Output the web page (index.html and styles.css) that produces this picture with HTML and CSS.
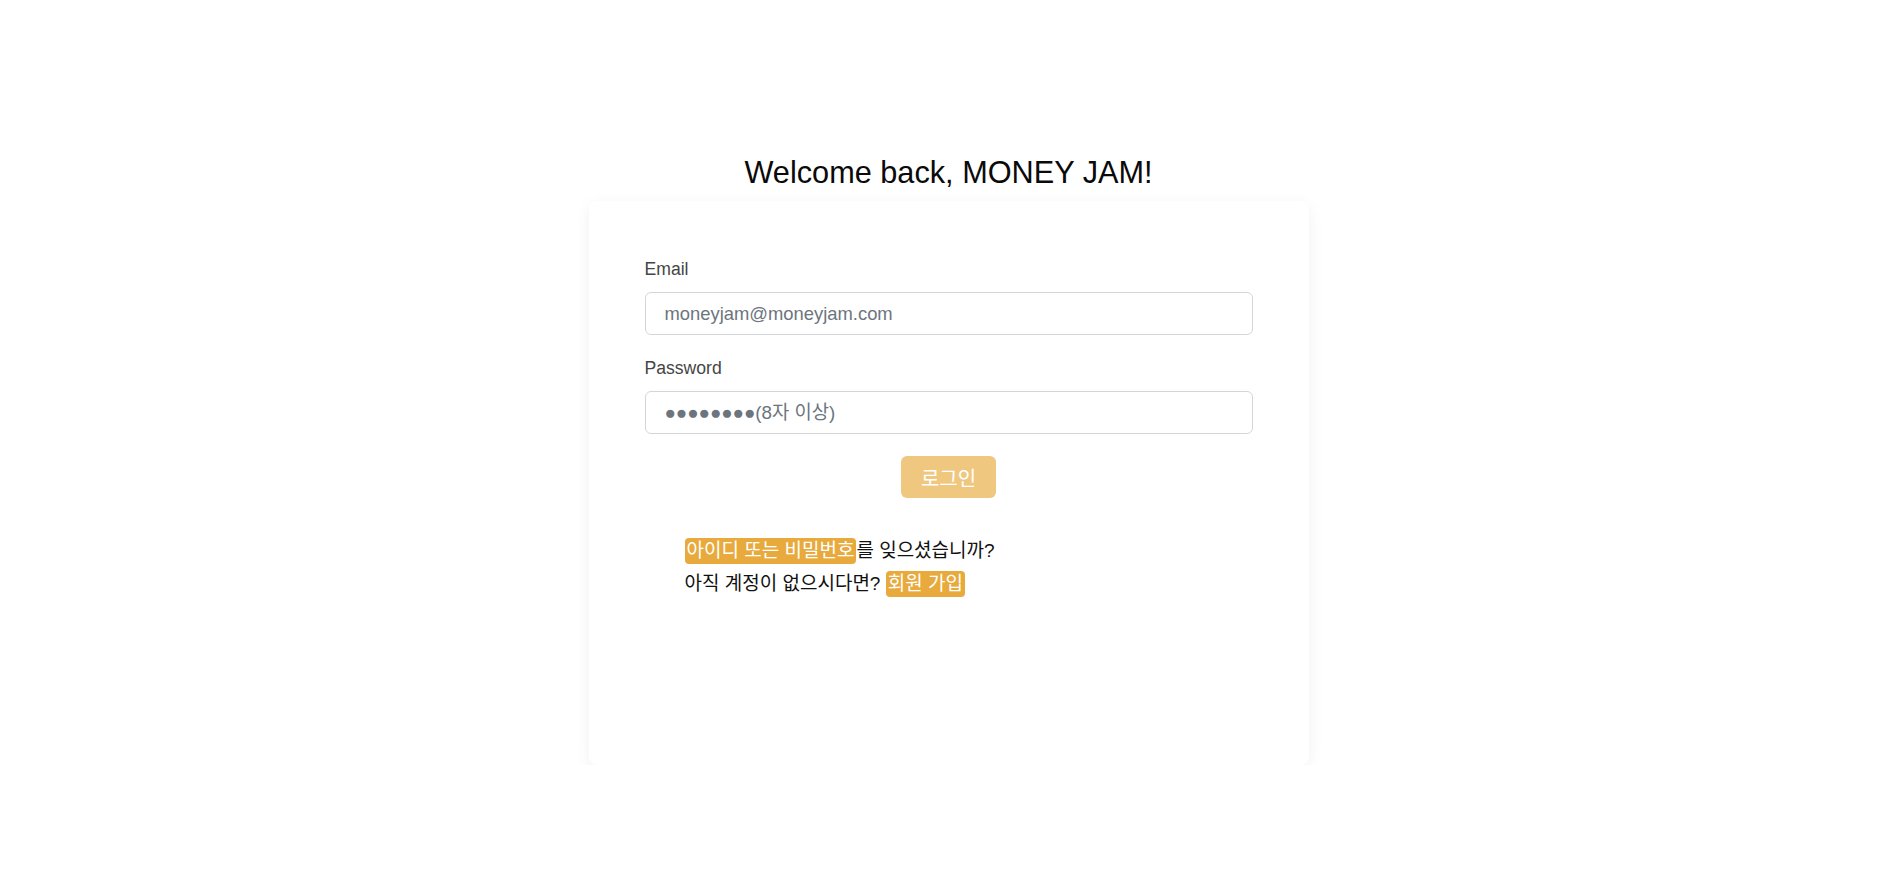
FILE: index.html
```html
<!DOCTYPE html>
<html lang="ko">
<head>
<meta charset="utf-8">
<title>MONEY JAM Login</title>
<link rel="stylesheet" href="styles.css">
</head>
<body>
<main class="page">
  <h1 class="title">Welcome back, MONEY JAM!</h1>
  <section class="card">
    <form class="form">
      <div class="field">
        <label class="label" for="email">Email</label>
        <input class="input" id="email" type="text" placeholder="moneyjam@moneyjam.com">
      </div>
      <div class="field">
        <label class="label" for="pw">Password</label>
        <input class="input input-pw" id="pw" type="text" placeholder="●●●●●●●●(8자 이상)">
      </div>
      <div class="actions">
        <button class="btn" type="button">로그인</button>
      </div>
    </form>
    <ul class="links">
      <li><a class="badge" href="#">아이디 또는 비밀번호</a>를 잊으셨습니까?</li>
      <li>아직 계정이 없으시다면? <a class="badge" href="#">회원 가입</a></li>
    </ul>
  </section>
</main>
</body>
</html>
```

FILE: styles.css
```css
html, body {
  margin: 0;
  padding: 0;
  background: #ffffff;
}

body {
  font-family: "Liberation Sans", Arial, "Noto Sans CJK KR", sans-serif;
  color: #111111;
}

.page {
  display: flex;
  flex-direction: column;
  align-items: center;
  padding-top: 156px;
}

.title {
  margin: 0 0 11px 0;
  font-size: 30.7px;
  font-weight: 400;
  line-height: 34px;
  color: #0a0a0a;
}

.card {
  box-sizing: border-box;
  width: 720px;
  height: 564px;
  padding: 56px 56px 0 56px;
  background: #ffffff;
  border-radius: 8px;
  box-shadow: 0 4px 16px rgba(0, 0, 0, 0.06);
}

.form {
  display: flex;
  flex-direction: column;
}

.field {
  display: flex;
  flex-direction: column;
  margin-bottom: 21px;
}

.field:nth-child(2) {
  margin-bottom: 22px;
}

.label {
  font-size: 17.6px;
  line-height: 24px;
  color: #454545;
  margin-bottom: 11px;
}

.input {
  box-sizing: border-box;
  width: 100%;
  height: 43px;
  padding: 0 19px;
  border: 1px solid #d3d5d8;
  border-radius: 6px;
  font-family: "Liberation Sans", Arial, "Noto Sans CJK KR", sans-serif;
  font-size: 18.4px;
  color: #495057;
  background: #ffffff;
  outline: none;
}

.input-pw {
  font-size: 18.8px;
}

.input::placeholder {
  color: #6c757d;
  opacity: 1;
}

.actions {
  display: flex;
  justify-content: center;
}

.btn {
  height: 42px;
  padding: 0 20px;
  border: none;
  border-radius: 6px;
  background: #e8aa3c;
  opacity: 0.65;
  color: #ffffff;
  font-family: "Liberation Sans", Arial, "Noto Sans CJK KR", sans-serif;
  font-size: 20px;
  cursor: default;
}

.links {
  list-style: none;
  margin: 36px 0 0 0;
  padding-left: 40px;
  font-size: 19px;
  line-height: 33px;
  color: #111111;
}

.badge {
  display: inline-block;
  line-height: 26px;
  background: #e8aa3c;
  color: #ffffff;
  text-decoration: none;
  padding: 0 2px;
  border-radius: 4px;
}
```
